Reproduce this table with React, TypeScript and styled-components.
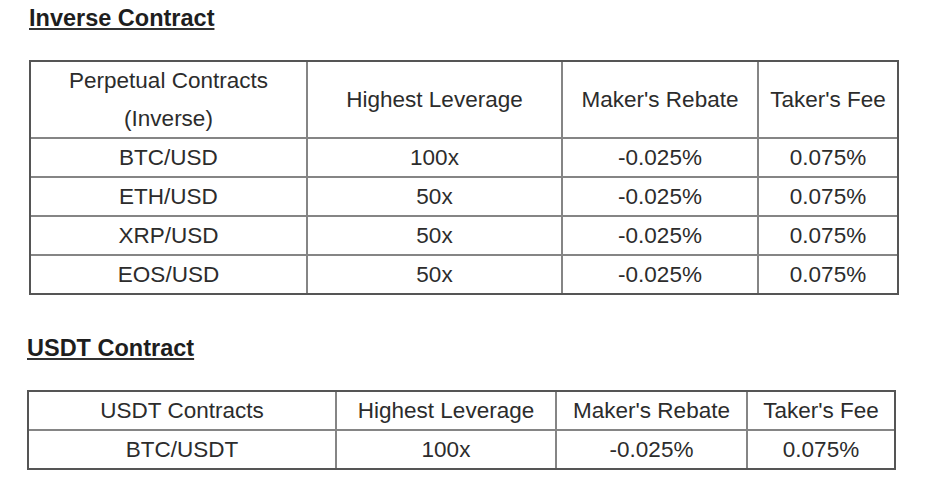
import React from "react";
import styled, { createGlobalStyle } from "styled-components";

const GlobalStyle = createGlobalStyle`
  html, body {
    margin: 0;
    padding: 0;
    background: #ffffff;
  }
  body {
    font-family: "Liberation Sans", Arial, sans-serif;
    color: #2a2a2a;
  }
`;

const Page = styled.div`
  width: 934px;
  height: 483px;
  box-sizing: border-box;
  padding-top: 5px;
  display: flex;
  flex-direction: column;
  gap: 40px;
  overflow: hidden;
`;

const Section = styled.section<{ $indent: number }>`
  display: flex;
  flex-direction: column;
  gap: 29px;
  padding-left: ${(p) => p.$indent}px;
`;

const Heading = styled.h2`
  margin: 0;
  font-size: 23.5px;
  line-height: 26px;
  font-weight: 700;
  color: #1e1e1e;
  text-decoration: underline;
  text-decoration-thickness: 2px;
  text-underline-offset: 2px;
  text-decoration-color: #333;
`;

const Table = styled.table<{ $width: number }>`
  width: ${(p) => p.$width}px;
  table-layout: fixed;
  border-collapse: separate;
  border-spacing: 0;
  border: 2px solid #555555;
  font-size: 22.5px;
  color: #2c2c2c;
`;

const Cell = styled.td<{ $h: number; $lh?: number }>`
  box-sizing: content-box;
  height: ${(p) => p.$h}px;
  padding: 0;
  text-align: center;
  vertical-align: middle;
  font-weight: 400;
  line-height: ${(p) => p.$lh ?? p.$h}px;
  border-right: 2px solid #858585;
  border-bottom: 2px solid #858585;
  white-space: nowrap;

  &:last-child {
    border-right: none;
  }
  tr:last-child > & {
    border-bottom: none;
  }
`;

type TableSpec = {
  widths: number[];
  header: React.ReactNode[];
  headerHeight: number;
  headerLine: number;
  rows: string[][];
};

const inverse: TableSpec = {
  widths: [277, 255, 196, 138],
  header: [
    <>
      Perpetual Contracts
      <br />
      (Inverse)
    </>,
    "Highest Leverage",
    "Maker's Rebate",
    "Taker's Fee",
  ],
  headerHeight: 75,
  headerLine: 37.5,
  rows: [
    ["BTC/USD", "100x", "-0.025%", "0.075%"],
    ["ETH/USD", "50x", "-0.025%", "0.075%"],
    ["XRP/USD", "50x", "-0.025%", "0.075%"],
    ["EOS/USD", "50x", "-0.025%", "0.075%"],
  ],
};

const usdt: TableSpec = {
  widths: [308, 220, 191, 146],
  header: ["USDT Contracts", "Highest Leverage", "Maker's Rebate", "Taker's Fee"],
  headerHeight: 37,
  headerLine: 37,
  rows: [["BTC/USDT", "100x", "-0.025%", "0.075%"]],
};

function FeeTable({ spec }: { spec: TableSpec }) {
  const total = spec.widths.reduce((a, b) => a + b, 0) + 4;
  return (
    <Table $width={total}>
      <colgroup>
        {spec.widths.map((w, i) => (
          <col key={i} style={{ width: w }} />
        ))}
      </colgroup>
      <tbody>
        <tr>
          {spec.header.map((h, i) => (
            <Cell as="th" key={i} $h={spec.headerHeight} $lh={spec.headerLine}>
              {h}
            </Cell>
          ))}
        </tr>
        {spec.rows.map((r, ri) => (
          <tr key={ri}>
            {r.map((c, ci) => (
              <Cell key={ci} $h={37}>
                {c}
              </Cell>
            ))}
          </tr>
        ))}
      </tbody>
    </Table>
  );
}

export default function App() {
  return (
    <>
      <GlobalStyle />
      <Page>
        <Section $indent={29}>
          <Heading>Inverse Contract</Heading>
          <FeeTable spec={inverse} />
        </Section>
        <Section $indent={27}>
          <Heading>USDT Contract</Heading>
          <FeeTable spec={usdt} />
        </Section>
      </Page>
    </>
  );
}
